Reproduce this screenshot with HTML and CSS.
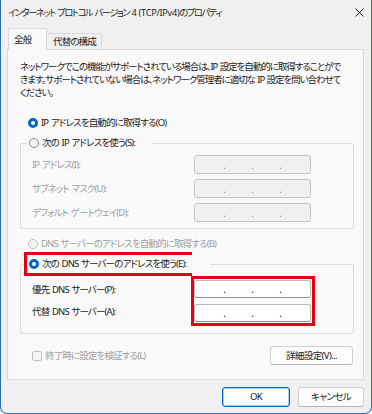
FILE: index.html
```html
<!DOCTYPE html>
<html lang="ja">
<head>
<meta charset="utf-8">
<title>プロパティ</title>
<link rel="stylesheet" href="styles.css">
</head>
<body>
<div class="window">
  <div class="titlebar">
    <span class="title">インターネット プロトコル バージョン <span class="lat">4 (TCP/IPv4)</span>のプロパティ</span>
    <svg class="close" viewBox="0 0 9 9" width="9" height="9"><path d="M0.5 0.5 L8.5 8.5 M8.5 0.5 L0.5 8.5" stroke="#1f1f1f" stroke-width="1" fill="none"/></svg>
  </div>
  <div class="tabs">
    <div class="tab active">全般</div>
    <div class="tab">代替の構成</div>
  </div>
  <div class="panel">
    <p class="desc">ネットワークでこの機能がサポートされている場合は、IP 設定を自動的に取得することがで<br>きます。サポートされていない場合は、ネットワーク管理者に適切な IP 設定を問い合わせて<br>ください。</p>

    <div class="radio-row first"><span class="radio checked"></span><span class="rtext">IP アドレスを自動的に取得する(O)</span></div>

    <div class="group g1">
      <div class="legend"><span class="legend-inner"><span class="radio"></span><span class="rtext">次の IP アドレスを使う(S):</span></span></div>
      <div class="fields disabled">
        <span class="label">IP アドレス(I):</span>
        <div class="ipbox"><span>.</span><span>.</span><span>.</span></div>
        <span class="label">サブネット マスク(U):</span>
        <div class="ipbox"><span>.</span><span>.</span><span>.</span></div>
        <span class="label">デフォルト ゲートウェイ(D):</span>
        <div class="ipbox"><span>.</span><span>.</span><span>.</span></div>
      </div>
    </div>

    <div class="radio-row dns-auto disabled"><span class="radio"></span><span class="rtext">DNS サーバーのアドレスを自動的に取得する(B)</span></div>

    <div class="group g2">
      <div class="legend wide"><span class="legend-inner marked"><span class="radio checked"></span><span class="rtext">次の DNS サーバーのアドレスを使う(E):</span></span></div>
      <div class="fields2">
        <span class="label l1">優先 DNS サーバー(P):</span>
        <span class="label l2">代替 DNS サーバー(A):</span>
        <div class="inputs marked">
          <div class="ipbox enabled"><span>.</span><span>.</span><span>.</span></div>
          <div class="ipbox enabled"><span>.</span><span>.</span><span>.</span></div>
        </div>
      </div>
    </div>

    <div class="bottom-row">
      <div class="check-row disabled"><span class="checkbox"></span><span class="rtext">終了時に設定を検証する(L)</span></div>
      <button class="btn adv">詳細設定(V)...</button>
    </div>
  </div>
  <div class="footer">
    <button class="btn ok">OK</button>
    <button class="btn cancel">キャンセル</button>
  </div>
</div>
</body>
</html>
```

FILE: styles.css
```css
* { box-sizing: border-box; }
html, body { margin: 0; padding: 0; }
body {
  width: 372px;
  height: 414px;
  background: #ffffff;
  font-family: "Noto Sans", "Noto Sans CJK JP", sans-serif;
  font-size: 9.5px;
  letter-spacing: -0.85px;
  color: #1b1b1b;
  font-feature-settings: "palt";
}
.window {
  width: 372px;
  height: 414px;
  background: #f0f0f0;
  border: 1px solid #2f6db5;
  border-top: none;
  border-radius: 0 0 7px 7px;
  display: flex;
  flex-direction: column;
  overflow: hidden;
}
.titlebar {
  height: 26px;
  flex: none;
  display: flex;
  align-items: center;
  justify-content: space-between;
  padding: 0 7px 0 7px;
}
.title {
  white-space: nowrap;
  line-height: 14px;
  font-size: 9.2px;
  letter-spacing: -1.35px;
  word-spacing: 1.2px;
}
.title .lat { letter-spacing: -0.3px; word-spacing: 0; }
.close { display: block; margin-top: -2px; }

.tabs {
  height: 23px;
  flex: none;
  display: flex;
  align-items: flex-end;
  padding-left: 7px;
}
.tab {
  height: 16px;
  padding: 0 5px 0 6px;
  border: 1px solid #d9d9d9;
  border-bottom: none;
  border-left: none;
  background: #f0f0f0;
  display: flex;
  align-items: center;
  line-height: 14px;
}
.tab.active {
  height: 22px;
  width: 39px;
  margin-bottom: -1px;
  padding: 0 0 0 5px;
  border-left: 1px solid #d9d9d9;
  background: #f9f9f9;
  position: relative;
  z-index: 1;
}

.panel {
  flex: none;
  height: 331px;
  margin: 0 7px 0 6px;
  border: 1px solid #d9d9d9;
  background: #f9f9f9;
  padding: 0 9px 0 12px;
  display: flex;
  flex-direction: column;
}
.desc {
  margin: 10px 0 0 0;
  line-height: 13px;
  white-space: nowrap;
  letter-spacing: -1.05px;
  word-spacing: 1px;
}
.radio-row {
  display: flex;
  align-items: center;
  height: 16px;
  padding-left: 8px;
}
.radio-row.first { margin-top: 16px; }
.radio {
  width: 10px;
  height: 10px;
  border-radius: 50%;
  border: 1px solid #8b8b8b;
  background: #f5f5f5;
  flex: none;
  margin-right: 3px;
}
.radio.checked {
  border: 3px solid #0067c0;
  background: #ffffff;
}
.disabled .radio { border-color: #c2c2c2; background: #f5f5f5; }
.rtext { white-space: nowrap; line-height: 14px; word-spacing: 1px; }
.disabled .rtext, .disabled .label { color: #a0a0a0; }

.group {
  border: 1px solid #dcdcdc;
  border-radius: 2px;
}
.g1 { margin-top: 12px; padding: 0 0 6px 11px; }
.g2 { margin-top: 12px; padding: 0 0 10px 11px; }
.legend {
  margin: -10px 0 0 -5px;
  height: 18px;
  display: flex;
}
.legend-inner {
  display: flex;
  align-items: center;
  height: 18px;
  padding: 0 16px 0 2px;
  background: #f9f9f9;
}
.legend.wide .legend-inner { padding-right: 3px; }
.legend.wide::after {
  content: "";
  width: 21px;
  height: 18px;
  background: #f9f9f9;
}
.marked { outline: 3px solid #e60012; }

.fields {
  margin-top: 3px;
  display: grid;
  grid-template-columns: 162px 117px;
  row-gap: 5px;
  align-items: center;
}
.label { white-space: nowrap; line-height: 14px; word-spacing: 1px; }
.ipbox {
  height: 19px;
  width: 117px;
  border: 1px solid #c3c3c3;
  border-radius: 3px;
  background: #f0f0f0;
  display: grid;
  grid-template-columns: 28px 28px 28px;
  padding-left: 3px;
  align-items: center;
  color: #b08f78;
  font-size: 10px;
  line-height: 10px;
  letter-spacing: 0;
}
.ipbox span { text-align: right; }
.ipbox.enabled {
  background: #ffffff;
  border-color: #b9b9b9;
  border-bottom-color: #8e8e8e;
  color: #1b1b1b;
}

.dns-auto { margin-top: 7px; }

.fields2 {
  margin-top: 6px;
  display: grid;
  grid-template-columns: 162px 118px;
  grid-template-rows: 22px 22px;
  align-items: center;
}
.l1 { grid-column: 1; grid-row: 1; }
.l2 { grid-column: 1; grid-row: 2; }
.inputs {
  grid-column: 2;
  grid-row: 1 / 3;
  align-self: stretch;
  display: flex;
  flex-direction: column;
  gap: 6px;
  padding: 1px 1px 1px 0;
}

.bottom-row {
  margin-top: 12px;
  height: 19px;
  display: flex;
  align-items: center;
  justify-content: space-between;
  padding-left: 12px;
  padding-right: 1px;
}
.check-row { display: flex; align-items: center; }
.checkbox {
  width: 10px;
  height: 10px;
  border: 1px solid #c2c2c2;
  border-radius: 2px;
  background: #f5f5f5;
  margin-right: 3px;
}
.btn {
  font-family: inherit;
  font-size: 9.5px;
  letter-spacing: -0.6px;
  font-feature-settings: "palt";
  color: #1b1b1b;
  background: #fdfdfd;
  border: 1px solid #d0d0d0;
  border-bottom-color: #b5b5b5;
  border-radius: 3px;
  height: 19px;
  padding: 0;
  line-height: 14px;
}
.adv { width: 83px; }
.footer {
  flex: none;
  display: flex;
  justify-content: flex-end;
  gap: 8px;
  padding: 7px 7px 0 0;
}
.ok {
  width: 68px;
  height: 20px;
  border: 1px solid #0067c0;
  box-shadow: inset 0 0 0 0.5px #5f9bd6;
}
.cancel { width: 66px; height: 20px; }
```
